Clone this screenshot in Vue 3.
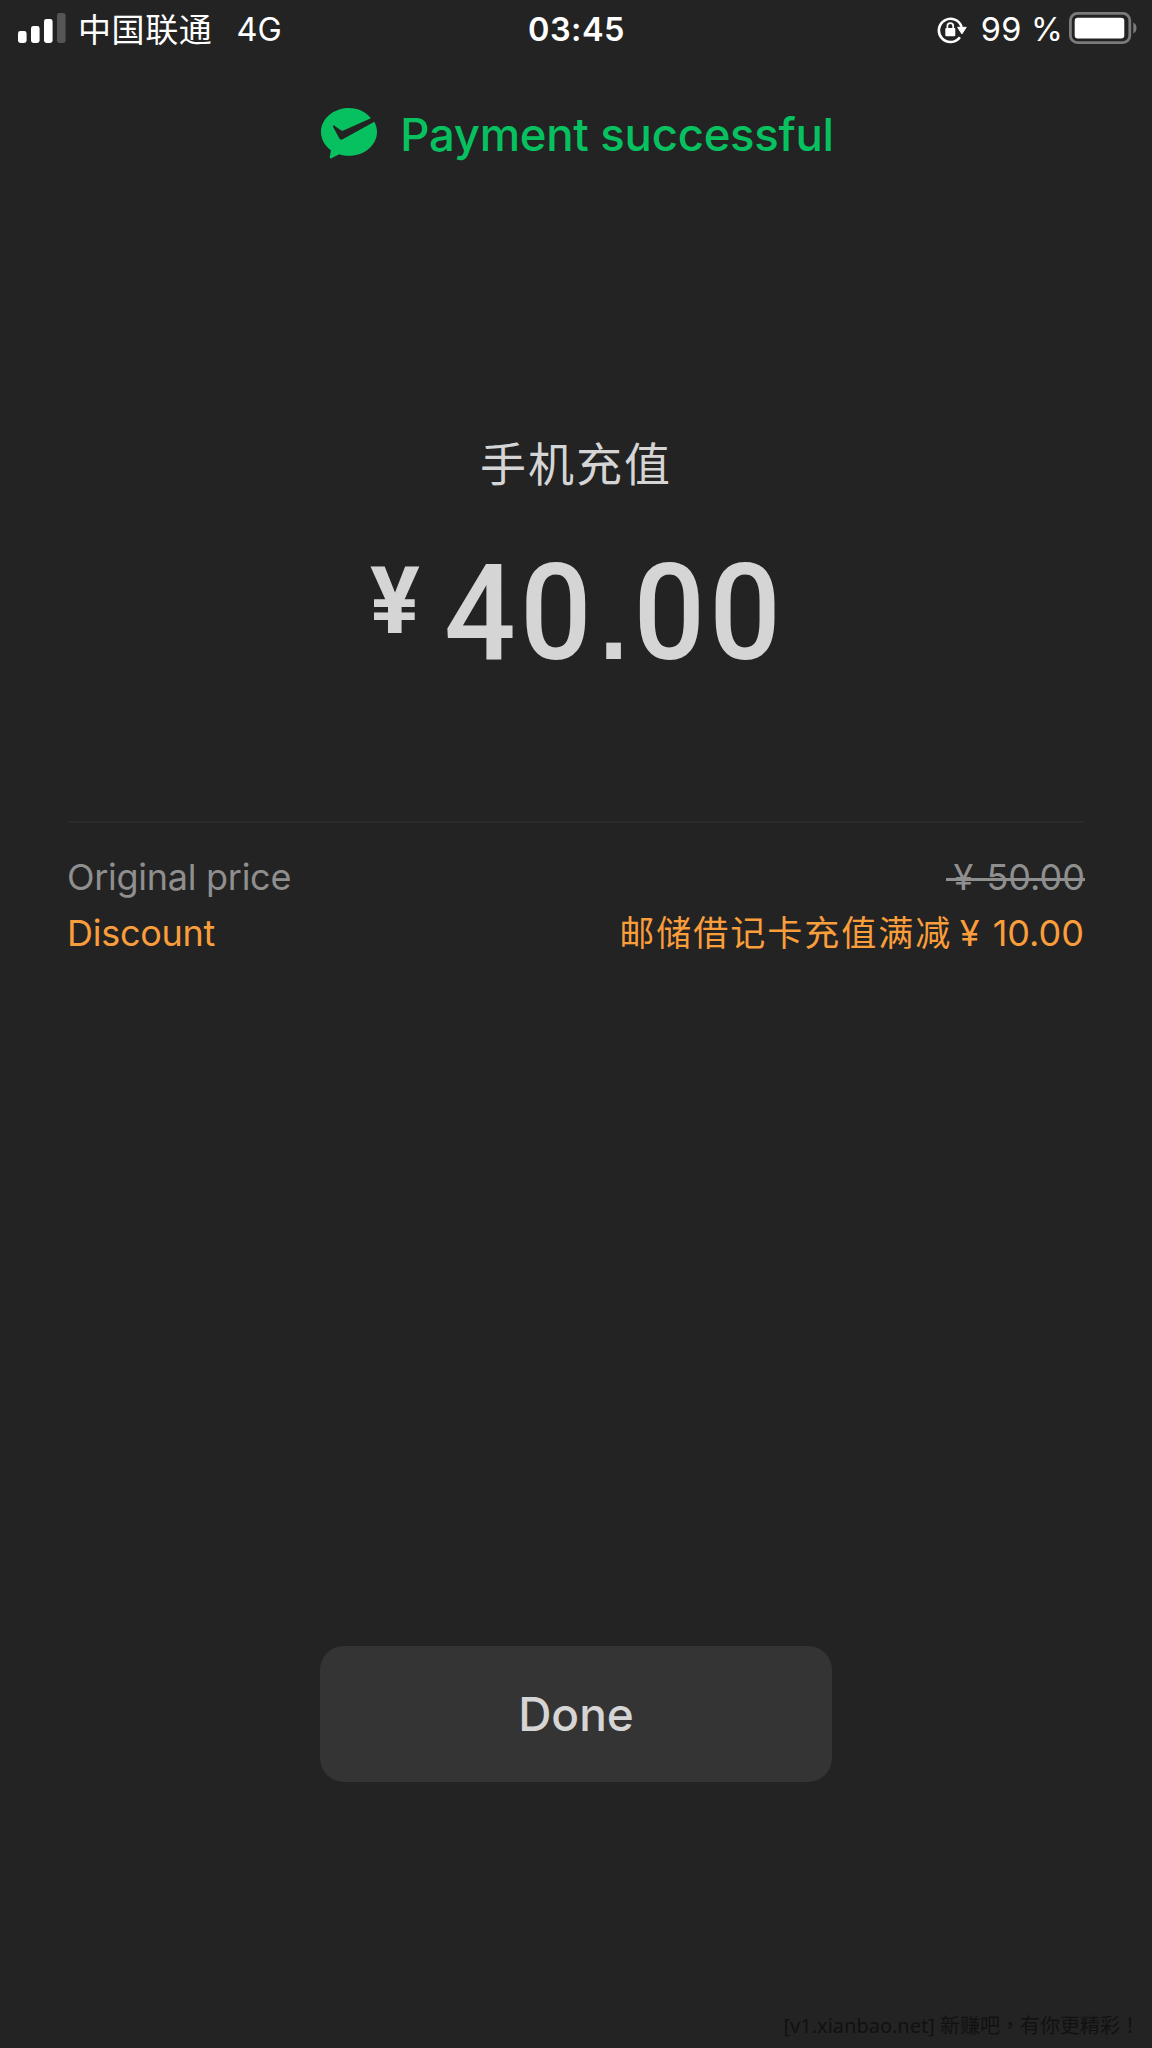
<script setup>
const signal = [
  { x: 0, h: 12 },
  { x: 13, h: 17 },
  { x: 26, h: 24 },
  { x: 39, h: 30, dim: true },
]
</script>

<template>
  <main class="screen">
    <header class="status">
      <div class="side">
        <svg class="signal" width="48" height="30" viewBox="0 0 48 30">
          <rect v-for="b in signal" :key="b.x" :x="b.x" :y="30 - b.h" width="8.6" :height="b.h" rx="2.4" :fill="b.dim ? '#555' : '#fff'" />
        </svg>
        <span class="carrier">中国联通</span>
        <span class="network">4G</span>
      </div>
      <time class="clock">03:45</time>
      <div class="side right">
        <svg class="lock" width="30" height="28" viewBox="0 0 30 28">
          <path d="M22.9 21.2A11.6 11.6 0 1 1 24.6 11" fill="none" stroke="#fff" stroke-width="2.6" />
          <path d="M20.6 11.3h8.6l-4.3 6.6z" fill="#fff" stroke="#fff" stroke-width="1" stroke-linejoin="round" />
          <rect x="8.3" y="12" width="10" height="8.2" rx="1" fill="#fff" />
          <path d="M10.4 12.5V10a2.9 2.9 0 0 1 5.8 0v2.5" fill="none" stroke="#fff" stroke-width="1.7" />
        </svg>
        <span class="percent">99 %</span>
        <svg class="battery" width="68" height="32" viewBox="0 0 68 32">
          <rect x="1.4" y="1.4" width="59.4" height="29.2" rx="7" fill="none" stroke="#7b7b7b" stroke-width="2.8" />
          <rect x="5.7" y="5.7" width="49.6" height="20.8" rx="3.2" fill="#fff" />
          <path d="M64.3 10.6c2.2 1.1 3.2 3 3.2 5.4s-1 4.3-3.2 5.4z" fill="#7b7b7b" />
        </svg>
      </div>
    </header>

    <section class="result">
      <svg class="logo" width="56" height="51" viewBox="0 0 56 51">
        <path fill="#07c160" d="M49.9 10.2C45 4 37 0 28 0 12.5 0 0 10.7 0 24c0 7.3 3.800 13.800 9.900 18.200L8.800 49.100c-.2 1.200.7 1.700 1.700 1.100l7.700-4c3 1.100 6.300 1.600 9.800 1.600 15.500 0 28-10.600 28-23.800 0-3.700-1-7.200-2.700-10.300L21.700 31.200c-1.500.8-2.700.5-3.400-1L12 18.800c-.3-1 .6-1.500 1.500-1l6.300 4.500c.8.5 1.700.6 2.600.2z" />
      </svg>
      <h1 class="headline">Payment successful</h1>
    </section>

    <h2 class="merchant">手机充值</h2>
    <div class="amount"><span class="yen">¥</span><span class="digits">40<span class="point">.</span>00</span></div>

    <section class="details">
      <div class="row muted"><span class="name">Original price</span><span class="old"><span class="y">¥</span> 50.00</span></div>
      <div class="row promo"><span class="name">Discount</span><span class="off"><span class="cjk">邮储借记卡充值满减</span><span class="y">¥</span> 10.00</span></div>
    </section>

    <button class="done" type="button">Done</button>
    <footer class="credit">[v1.xianbao.net] 新赚吧<span class="mark" lang="zh-TW">，</span>有你更精彩<span class="mark" lang="zh-TW">！</span></footer>
  </main>
</template>

<style>
body { background: #232323; }
</style>

<style scoped>
.screen {
  display: flex;
  flex-direction: column;
  align-items: center;
  width: 1152px;
  height: 2048px;
  overflow: hidden;
  background: #232323;
  color: #d5d5d5;
  font-family: Inter, "Noto Sans CJK SC", sans-serif;
}
.status {
  display: flex;
  align-items: center;
  flex: none;
  width: 1152px;
  height: 58px;
  box-sizing: border-box;
  padding: 0 15px 0 18px;
  color: #fff;
  font-size: 32.5px;
  line-height: 60px;
  white-space: pre;
}
.side { display: flex; flex: 1; align-items: center; height: 58px; }
.right { justify-content: flex-end; }
.signal { margin: -2px 12px 0 0; }
.carrier { font-family: "Noto Sans CJK SC", sans-serif; font-size: 33px; letter-spacing: .6px; line-height: 56px; margin-top: -3px; }
.network { margin: 2px 0 0 24px; }
.clock { margin: 2px 2px 0 0; font-weight: 600; letter-spacing: .5px; }
.lock { margin: 1px 14px 0 0; }
.percent { margin: 2px 6px 0 0; letter-spacing: .2px; }
.battery { margin-top: -2px; }
.result {
  display: flex;
  align-items: center;
  flex: none;
  height: 60px;
  margin: 47px 0 0 3px;
}
.logo { margin-right: 23px; margin-top: -4px; }
.headline { margin: 0; font-size: 45.5px; line-height: 60px; font-weight: 500; letter-spacing: -.28px; color: #07c160; white-space: nowrap; }
.merchant {
  flex: none;
  margin: 262px 0 0;
  font: 400 46px/68px "Noto Sans CJK SC", sans-serif;
  letter-spacing: 2px;
}
.amount {
  display: flex;
  flex: none;
  align-self: flex-start;
  height: 140px;
  margin: 49px 0 0 370px;
  font-family: Roboto, sans-serif;
  font-weight: 500;
}
.yen { flex: none; width: 49px; font-size: 93px; line-height: 115px; font-weight: 700; margin-right: 25px; }
.digits {
  font-size: 134px;
  line-height: 140px;
  letter-spacing: 4.6px;
  white-space: nowrap;
  transform: scaleX(.94);
  transform-origin: left;
}
.point {
  display: inline-block;
  width: 40px;
  font: 700 110px/100px "Liberation Sans", sans-serif;
  letter-spacing: 0;
  text-align: center;
  text-indent: -2px;
}
.details {
  flex: none;
  box-sizing: border-box;
  width: 1018px;
  height: 141px;
  margin-top: 137px;
  padding-top: 27px;
  border-top: 2px solid #2a2a2a;
  font-size: 36px;
}
.row { display: flex; justify-content: space-between; height: 55.5px; line-height: 55px; white-space: pre; }
.name { letter-spacing: -.27px; }
.muted { color: #8f8f8f; }
.promo { color: #fa9d3b; }
.y { padding: 0 3px 0 8.5px; }
.off { margin-right: 1px; }
.off .y { padding-left: 7.5px; }
.old { position: relative; }
.old::after {
  content: "";
  position: absolute;
  left: 1px;
  right: 0;
  top: 28px;
  height: 3px;
  background: #8f8f8f;
}
.cjk { font-family: "Noto Sans CJK SC", sans-serif; font-size: 35px; letter-spacing: 2px; line-height: 1; }
.done {
  flex: none;
  width: 512px;
  height: 136px;
  margin-top: 684px;
  padding: 0;
  border: 0;
  border-radius: 24px;
  background: #343434;
  color: #d5d5d5;
  font: 500 46px/136px Inter, sans-serif;
}
.credit {
  flex: none;
  align-self: flex-end;
  margin: 226px 12px 0 0;
  font: 400 20px/36px "Noto Sans", "Noto Sans CJK SC", sans-serif;
  color: #111;
  white-space: nowrap;
}
.mark { font-family: "Noto Sans CJK TC", sans-serif; line-height: 1; }
</style>
